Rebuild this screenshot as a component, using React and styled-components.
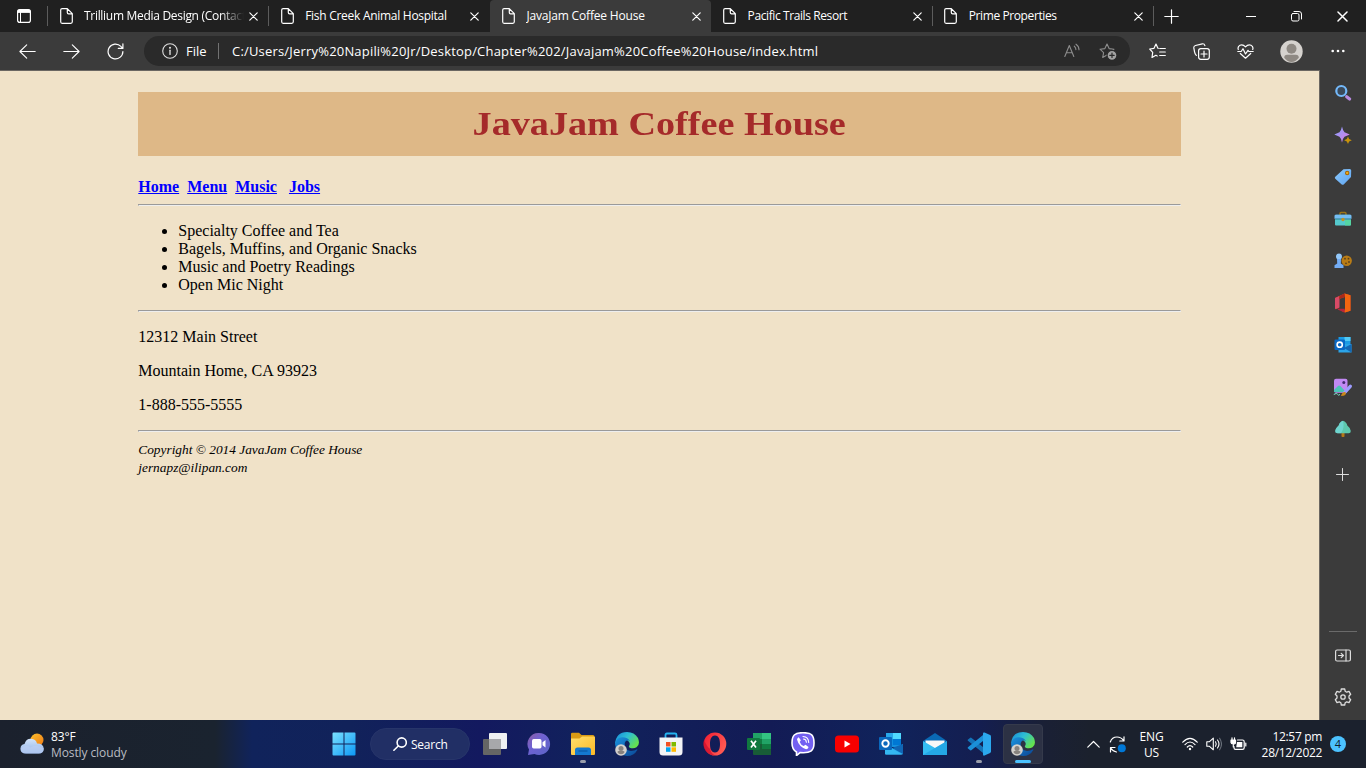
import React from "react";
import styled, { createGlobalStyle, css } from "styled-components";

const GlobalStyle = createGlobalStyle`
  * { box-sizing: border-box; }
  html, body { margin: 0; padding: 0; }
  body { overflow: hidden; background: #3b3b3b; }
  svg { display: block; flex: none; }
`;

const ui = css`
  font-family: "Open Sans", "Noto Sans", sans-serif;
  white-space: nowrap;
`;

const Screen = styled.div`
  width: 1366px;
  height: 768px;
  display: flex;
  flex-direction: column;
  overflow: hidden;
`;

/* ---------- Tab strip ---------- */
const TabStrip = styled.div`
  ${ui};
  height: 32px;
  flex: none;
  display: flex;
  background: #202020;
  color: #fff;
`;

const TabActions = styled.div`
  width: 47.5px;
  display: grid;
  place-items: center;
`;

const Tab = styled.div`
  width: 221.2px;
  height: 32px;
  display: flex;
  align-items: center;
  padding: 0 10.5px 0 12px;
  background: ${(p) => (p.$active ? "#3b3b3b" : "transparent")};
  border-radius: 4px 4px 0 0;
`;

const TabTitle = styled.span`
  flex: 1;
  margin-left: 11.5px;
  overflow: hidden;
  font-size: 12px;
  line-height: 18px;
  letter-spacing: ${(p) => p.$spacing}px;
  mask-image: ${(p) => (p.$fade ? "linear-gradient(90deg, #000 136px, transparent 160px)" : "none")};
`;

const Separator = styled.div`
  width: 1px;
  height: 20px;
  margin: 6px -0.5px 0;
  background: ${(p) => (p.$hidden ? "transparent" : "#5c5c5c")};
`;

const NewTab = styled.div`
  width: 36px;
  display: grid;
  place-items: center;
`;

const WindowControls = styled.div`
  margin-left: auto;
  padding-right: 0.5px;
  display: flex;
`;

const WindowButton = styled.div`
  width: 46px;
  display: grid;
  place-items: center;
`;

/* ---------- Address toolbar ---------- */
const Toolbar = styled.div`
  ${ui};
  height: 38px;
  flex: none;
  display: flex;
  align-items: center;
  padding: 0 6px;
  background: #3b3b3b;
  color: #fff;
`;

const ToolButton = styled.div`
  width: ${(p) => p.$w || 44}px;
  height: 38px;
  padding-right: 1px;
  display: grid;
  place-items: center;
`;

const AddressBar = styled.div`
  width: 986px;
  height: 30px;
  margin: 0 6px;
  padding: 0 4px 0 18px;
  display: flex;
  align-items: center;
  border-radius: 15px;
  background: #2a2a2a;
`;

const Scheme = styled.span`
  margin-left: 8px;
  width: 32px;
  font-size: 13px;
`;

const Divider = styled.span`
  width: 1px;
  height: 16px;
  background: #727272;
`;

const Address = styled.span`
  flex: 1;
  margin-left: 13px;
  font-size: 13px;
  letter-spacing: 0.19px;
`;

const AddressAction = styled.div`
  width: 36px;
  display: grid;
  place-items: center;
`;

/* ---------- Page and side pane ---------- */
const Middle = styled.div`
  height: 650px;
  flex: none;
  display: flex;
`;

const Page = styled.main`
  width: 1320px;
  padding: 0 8px;
  overflow: hidden;
  border-top: 1px solid #6b6762;
  border-right: 1px solid #6b6762;
  background: #f0e2c8;
  color: #000;
  font: 16px/18px "Liberation Serif", "Times New Roman", serif;
`;

const Wrapper = styled.div`
  width: 80%;
  margin: 0 auto;
`;

const Banner = styled.h1`
  margin: 21.44px 0;
  height: 64px;
  line-height: 64px;
  font-size: 34px;
  text-align: center;
  color: #a52a2a;
  background: #deb887;
`;

const BannerText = styled.span`
  display: inline-block;
  transform: scaleX(1.123);
`;

const Nav = styled.nav`
  font-weight: bold;
  font-size: 16px;
  white-space: pre;
`;

const NavLink = styled.a`
  color: #0000ff;
  text-decoration: underline;
`;

const Rule = styled.hr`
  margin: 8px 0;
`;

const Offerings = styled.ul`
  margin: 16px 0;
  padding-left: 40px;
`;

const Line = styled.p`
  margin: 16px 0;
`;

const Footer = styled.footer`
  padding-top: 1px;
  font-size: 13.35px;
  font-style: italic;
  line-height: 18px;
`;

const SidePane = styled.aside`
  width: 46px;
  display: flex;
  flex-direction: column;
  align-items: center;
  padding: 2px 0;
  background: #3b3b3b;
`;

const SideButton = styled.div`
  width: 46px;
  height: 42px;
  padding-right: 1px;
  margin-top: ${(p) => p.$gap || 0}px;
  display: grid;
  place-items: center;
`;

const SideRule = styled.div`
  width: 28px;
  height: 1px;
  margin-top: auto;
  margin-bottom: 2px;
  background: #6a6a6a;
`;

/* ---------- Taskbar ---------- */
const Taskbar = styled.footer`
  ${ui};
  height: 48px;
  flex: none;
  display: flex;
  align-items: center;
  color: #fff;
  background: linear-gradient(90deg, #1b212d 0, #1a232f 215px, #10235b 252px, #11225a 350px,
    #13195f 480px, #11225c 590px, #131b55 770px, #10235b 890px, #141e50 980px, #1a2035 1045px, #1b212d 1090px);
`;

const Weather = styled.div`
  width: 322px;
  padding-left: 19px;
  display: flex;
  align-items: center;
`;

const WeatherText = styled.div`
  margin-left: 7px;
  font-size: 12px;
  line-height: 16px;
  letter-spacing: -0.1px;
  padding-top: 2px;
`;

const Condition = styled.div`
  color: #b9bcc2;
`;

const TaskButton = styled.div`
  position: relative;
  width: 44px;
  height: 48px;
  display: grid;
  place-items: center;
`;

const ActivePlate = styled.div`
  width: 40px;
  height: 40px;
  display: grid;
  place-items: center;
  border-radius: 4px;
  background: #2c3144;
  border: 1px solid #353a4b;
`;

const RunningMark = styled.span`
  position: absolute;
  bottom: 5px;
  left: 50%;
  width: ${(p) => (p.$active ? 16 : 6)}px;
  height: 3px;
  transform: translateX(-50%);
  border-radius: 2px;
  background: ${(p) => (p.$active ? "#4cc2ff" : "#9a9eab")};
`;

const SearchPill = styled.div`
  width: 100px;
  height: 32px;
  margin: 0 3px 0 4px;
  padding-left: 22px;
  display: flex;
  align-items: center;
  border-radius: 16px;
  background: #212f65;
  border: 1px solid #27356a;
  font-size: 12px;
  font-weight: 500;
  letter-spacing: -0.25px;
`;

const SearchLabel = styled.span`
  margin-left: 4px;
  padding-top: 1px;
`;

const Tray = styled.div`
  margin-left: auto;
  padding-right: 20px;
  display: flex;
  align-items: center;
`;

const TrayItem = styled.div`
  width: ${(p) => p.$w}px;
  display: grid;
  place-items: center;
`;

const TrayText = styled.div`
  width: ${(p) => p.$w}px;
  padding-top: 1px;
  padding-left: ${(p) => p.$inset || 0}px;
  font-size: 12px;
  line-height: 16px;
  letter-spacing: ${(p) => p.$spacing}px;
  text-align: ${(p) => p.$align};
`;

const Notifications = styled.div`
  width: 16px;
  height: 16px;
  margin-left: 8px;
  border-radius: 50%;
  background: #4cc2ff;
  color: #10202c;
  font-size: 11px;
  line-height: 16px;
  text-align: center;
`;

/* ---------- Icons ---------- */
const Glyph = ({ w = 16, h = w, sw = 1, color = "#fff", children, box }) => (
  <svg width={w} height={h} viewBox={box || `0 0 ${w} ${h}`} fill="none" stroke={color}
    strokeWidth={sw} strokeLinecap="round" strokeLinejoin="round">{children}</svg>
);

const Art = ({ w = 24, h = w, children }) => (
  <svg width={w} height={h} viewBox={`0 0 ${w} ${h}`}>{children}</svg>
);

const FileIcon = () => (
  <Glyph w={13} h={16} sw={1.2}>
    <path d="M2.1.7h5.2l5 5v8.1q0 1.5-1.5 1.5H2.1Q.7 15.300.7 13.800V2.100Q.7.7 2.100.7zM7.300.9v3.600q0 1.300 1.300 1.300h3.600" />
  </Glyph>
);
const CloseIcon = ({ s = 9 }) => (
  <Glyph w={s} box="0 0 9 9" sw={1.2}><path d="M.8.8l7.400 7.400M8.200.8L.8 8.200" /></Glyph>
);
const TabActionsIcon = () => (
  <Glyph w={14}><rect x=".6" y=".6" width="12.800" height="12.800" rx="2.200" strokeWidth="1.200" />
    <path d="M1 3V2q0-1 1-1h10q1 0 1 1v1z" fill="#fff" /><path d="M3.500 3.500V13" /></Glyph>
);
const BackIcon = ({ flip }) => (
  <Glyph w={17} h={15} sw={1.1}>
    <path d={flip ? "M.8 7.500h15.300M9.300.8l6.800 6.700-6.800 6.700" : "M16.200 7.500H.9M7.700.8L.9 7.500l6.800 6.700"} />
  </Glyph>
);
const ReloadIcon = () => (
  <Glyph w={17} sw={1.2}><path d="M15.900 8.500a7.400 7.400 0 1 1-2-5.100l1.900 1.900M15.900.8v4.600h-4.600" /></Glyph>
);
const InfoIcon = () => (
  <Glyph w={16} sw={1.1} color="#dedede"><circle cx="8" cy="8" r="7.300" /><path d="M8 7.200v4.200" strokeWidth="1.400" /><circle cx="8" cy="4.700" r=".5" fill="#ddd" /></Glyph>
);
const ReadAloudIcon = () => (
  <Glyph w={16} sw={1.1} color="#8d8d8d"><path d="M.8 13.500L5.300 2.500l4.500 11M2.400 9.700h5.800M10.300 3.200q1.600 1.300 1.600 3.400M12 1.200q3 2 3 5.600" /></Glyph>
);
const starPath = "M8 1l2.100 4.600 4.900.6-3.600 3.400.9 4.900L8 12.100l-4.300 2.400.9-4.900L1 6.200l4.900-.6z";
const AddStarIcon = () => (
  <Glyph w={18} h={17} sw={1.1} color="#8d8d8d"><path d={starPath} />
    <circle cx="13" cy="12.300" r="4.900" fill="#a2a2a2" stroke="#2a2a2a" /><path d="M13 10.100v4.400M10.800 12.300h4.400" stroke="#2a2a2a" strokeWidth="1.200" /></Glyph>
);
const FavoritesIcon = () => (
  <Glyph w={17} h={16} sw={1.2}><path d="M9.300 5.300L8.900 5.200 7 1 5 5.300l-4.300.7 3 3.400-.7 5.100L6.900 12.300l1.300.7M10.700 5.500h5.600M10.700 9h5.600M10.700 12.500h5.600" /></Glyph>
);
const CollectionsIcon = () => (
  <Glyph w={17} sw={1.2}><rect x="5.600" y="5.600" width="10.700" height="10.700" rx="2.200" /><path d="M11 8v6M8 11h6M3.300 12.400Q1.900 11 1.500 8.600L.8 4.900Q.7 3 2.500 2.500L9.300.8q2-.3 2.600 1.800" /></Glyph>
);
const HealthIcon = () => (
  <Glyph w={17} h={15} sw={1.2}><path d="M1.300 5.500Q.3 2.700 3 1.200 6 .2 8.500 2.800 11 .2 14 1.200q2.700 1.500 1.700 4.300M3.300 9.500l5.200 4.700 5.200-4.700M.8 7.500h3.400L6 4.700l2.500 5.300 2.500-3.700.8 1.200h4.400" /></Glyph>
);
const MoreIcon = () => (
  <Art w={14} h={4}>{[1.7, 7, 12.3].map((x) => <circle key={x} cx={x} cy="2" r="1.300" fill="#fff" />)}</Art>
);
const Avatar = () => (
  <Art w={23}><circle cx="11.500" cy="11.500" r="11.200" fill="#d5d2ce" /><circle cx="11.500" cy="8.700" r="5" fill="#8e8983" />
    <path d="M4.200 17.800q0-3 3-3h8.600q3 0 3 3Q15.500 22 11.500 22t-7.300-4.200z" fill="#8e8983" /></Art>
);

const OutlookArt = ({ s = 24 }) => (
  <svg width={s} height={s} viewBox="0 0 24 24">
    <path d="M7 1h15v14H7z" fill="#1490df" /><path d="M14 1h8v6h-8z" fill="#50d9ff" /><path d="M7 1h7v6H7z" fill="#28a8ea" />
    <path d="M14 7h8v6h-8z" fill="#0078d4" /><path d="M6 12l9 5 9-5v9.500q0 1-1 1H7q-1 0-1-1z" fill="#28a8ea" />
    <path d="M24 12v10L13 16z" fill="#1066b5" /><path d="M6 12l17 10.500H7q-1 0-1-1z" fill="#35b8f1" />
    <rect y="5" width="13" height="13" rx="1" fill="#0a68bd" /><circle cx="6.500" cy="11.500" r="3.200" fill="none" stroke="#fff" strokeWidth="1.900" />
  </svg>
);

const SideOutlookArt = () => (
  <Art w={18}>
    <path d="M4.500 1h12v8h-12z" fill="#1b9be4" /><path d="M10.500 1h6v4h-6z" fill="#50c9f5" /><path d="M4.500 8h13v8.500h-13z" fill="#2ba4e8" />
    <path d="M17.500 8v8.500L10 12z" fill="#1267b4" /><rect x=".5" y="3.500" width="10.500" height="10.500" rx="1" fill="#0a68c4" />
    <circle cx="5.700" cy="8.700" r="2.600" fill="none" stroke="#fff" strokeWidth="1.600" />
  </Art>
);

const SideArts = [
  <Art w={18} key="search"><circle cx="7.300" cy="7" r="5" fill="#3b4a5a" stroke="#74b9fa" strokeWidth="2.200" /><path d="M12.700 12.700l2.900 2.300" stroke="#b98be0" strokeWidth="3.200" strokeLinecap="round" /></Art>,
  <Art w={18} key="spark"><defs><linearGradient id="spark" x2="1" y2="1"><stop stopColor="#83a3fd" /><stop offset="1" stopColor="#e078e4" /></linearGradient></defs>
    <path d="M8 .5Q9 5 10.500 6.200L15.800 8.500 10.500 10.800Q9 12 8 16.500 7 12 5.500 10.800L.3 8.500 5.500 6.200Q7 5 8 .5z" fill="url(#spark)" /><path d="M14 10.500l1.100 2.600 2.700 1.200-2.700 1.100L14 18l-1.200-2.600-2.600-1.100 2.600-1.200z" fill="#c8930b" /></Art>,
  <Art w={18} key="tag"><defs><linearGradient id="tag" x2="1" y2="1"><stop stopColor="#8bc9fb" /><stop offset="1" stopColor="#5fa4f2" /></linearGradient></defs>
    <path d="M9.500 1.200L15.700 1q1.500 0 1.500 1.500L17 9 9.700 16.400q-1 .9-2 0L1.300 10.700q-1-1 0-2z" fill="url(#tag)" /><circle cx="13.200" cy="5" r="2.200" fill="#a56300" /><circle cx="13.200" cy="5" r="1.200" fill="#edaa1d" /></Art>,
  <Art w={18} key="tools"><path d="M6 5V3.500q0-1 1-1h4q1 0 1 1V5" fill="none" stroke="#9c7417" strokeWidth="1.400" /><rect x="1" y="4.700" width="16" height="10.800" rx="1" fill="#55c9cd" /><path d="M.5 8.800V6q0-1.300 1.300-1.300h14.400q1.300 0 1.300 1.300v2.800z" fill="#75bdf3" /><path d="M1 9h16" stroke="#367d91" /><path d="M11 10h6v4.500q0 1-1 1h-5z" fill="#55d5a2" /><circle cx="9" cy="9.500" r="1.700" fill="#bd9426" /></Art>,
  <Art w={18} key="games"><circle cx="12.700" cy="8.700" r="5.200" fill="#b97c16" />{[[11, 6.7], [14.5, 6.7], [15, 10], [12, 11.3]].map(([x, y]) => <circle key={x + y} cx={x} cy={y} r=".9" fill="#59401d" />)}
    <circle cx="5" cy="4.600" r="3" fill="#93c8fb" /><path d="M3 7h4l-.2 4.500 2.700 1.800V16H.5v-2.700l2.700-1.800z" fill="#73acf4" /></Art>,
  <Art w={18} h={20} key="office"><path d="M10.500.5l6 1.700v15.500l-6 1.800-2.500-1 3-2V4L5 6v9l-3.700 1.300-.3-.8V5z" fill="#d83b20" /><path d="M10.500.5l6 1.700v15.500L11 19.400V4z" fill="#f16610" /><path d="M1 5l4.500-2v11.500l-4 1.500-.5-1z" fill="#d84a66" /><path d="M10.500.5L5.500 3 5 6l6-2z" fill="#a72a1a" /><path d="M4 15.800h7l-1 3.400-6-2.500z" fill="#b6263b" /></Art>,
  <SideOutlookArt key="outlook" />,
  <Art w={19} key="designer"><rect x="1" y=".8" width="13.500" height="14" rx="2" fill="#c189f3" /><path d="M1 12l4-4q1-1 2.300 0l5.700 6H1z" fill="#4bc4b6" /><circle cx="10.800" cy="4.500" r="1.500" fill="#442a72" /><path d="M17.300 8.300l-5.500 6" stroke="#9d9cff" strokeWidth="3.200" strokeLinecap="round" /><path d="M8 18q1.300-4.800 4.500-4 1.700 4-4.500 4z" fill="#c9871a" /><path d="M.8 16.500q3-2 3.700-.3t2.500.3" fill="none" stroke="#80e8d0" /></Art>,
  <Art w={18} key="tree"><path d="M7.500 12h3v4.500q-1.500 1-3 0z" fill="#b57817" /><path d="M9 .8q3.800 1.500 4.300 4.700 3.500 2.800 3.500 5.500T14 13.300H4Q1.200 13.200 1.200 11t3.500-5.500Q5.200 2.300 9 .8z" fill="#5dc8ae" /><path d="M9 .8Q5.200 2.300 4.700 5.500 1.200 8.300 1.200 11T4 13.300h3Q11 8 9 .8z" fill="#7adbe0" opacity=".65" /></Art>,
];

const GearIcon = () => (
  <Glyph w={18} sw={1.3} color="#ddd"><circle cx="9" cy="9" r="2.200" /><path d="M7.300 1h3.400l.5 2.300 1.500.9 2.300-.8 1.700 2.900L15 8v2l1.700 1.700-1.700 2.900-2.300-.8-1.500.9-.5 2.300H7.300l-.5-2.300-1.500-.9-2.300.8-1.700-2.900L3 10V8L1.300 6.300 3 3.400l2.300.8 1.500-.9z" /></Glyph>
);
const PaneIcon = () => (
  <Glyph w={16} h={13} sw={1.2} color="#ddd"><rect x=".6" y="1" width="14.800" height="11" rx="1.500" /><path d="M11 1v11M3.500 6.500H8M6.200 4.300l2.200 2.200-2.200 2.200" /></Glyph>
);

const EdgeArt = ({ id }) => (
  <Art>
    <defs><linearGradient id={`${id}a`} x1="0" y1="0" x2="1" y2=".6"><stop stopColor="#1688dd" /><stop offset=".5" stopColor="#2ebed3" /><stop offset="1" stopColor="#65e24e" /></linearGradient>
      <linearGradient id={`${id}b`} x2="1" y2="1"><stop stopColor="#1b93df" /><stop offset="1" stopColor="#0b4695" /></linearGradient></defs>
    <path d="M0 12Q1 0 12 0q7.500 0 11 6 2.500 6.500-1.500 9.300-3 1.700-6.800.4-1.500-.8-.4-2.200 1.500-3-2-5.200Q5.500 5 0 12z" fill={`url(#${id}a)`} />
    <path d="M0 12q1-6.500 7.300-6.800Q13 5.200 15 9q-4-2-5.300 2Q9 18 16 19q3.500 0 6-1.800.6 0 .3.700Q19 24 12 24 1 23 0 12z" fill={`url(#${id}b)`} />
    <circle cx="6" cy="18" r="5.800" fill="#d5d2ce" /><circle cx="6" cy="16.400" r="2.500" fill="#87827e" /><path d="M2.500 20.300q0-1.300 1.300-1.300h4.400q1.300 0 1.300 1.300Q8.500 22.300 6 22.300t-3.500-2z" fill="#87827e" />
  </Art>
);

const StartArt = () => (
  <Art><defs><linearGradient id="win" x2="1" y2="1"><stop stopColor="#7be1ff" /><stop offset="1" stopColor="#0c98f5" /></linearGradient></defs>
    <path d="M.5 1.500Q.5.500 1.500.500H11.500v11H.5zM12.500.5h10q1 0 1 1v10h-11zM.5 12.500h11v11h-10q-1 0-1-1zM12.500 12.500h11v10q0 1-1 1h-10z" fill="url(#win)" /></Art>
);

const taskApps = [
  { name: "views", art: <Art><rect x="6" y="1" width="18" height="16" rx="1" fill="#eef0f1" /><rect y="7" width="18" height="16" rx="1" fill="#656565" /><path d="M6 7h12v10H6z" fill="#a7a8ab" /></Art> },
  { name: "chat", art: <Art><defs><linearGradient id="chat" x2="1" y2="1"><stop stopColor="#8d5da2" /><stop offset=".4" stopColor="#6f62d2" /><stop offset="1" stopColor="#5b64c6" /></linearGradient></defs>
    <path d="M12 1a11 11 0 1 1-4.500 21L1 23l1-5.500A11 11 0 0 1 12 1z" fill="url(#chat)" /><rect x="5" y="7" width="9.500" height="9.500" rx="1.700" fill="#fff" /><path d="M15.500 10.200L18.500 8v7.500l-3-2.200z" fill="#fff" /></Art> },
  { name: "files", running: true, art: <Art><defs><linearGradient id="folder" x2="1" y2="1"><stop stopColor="#ffe06e" /><stop offset="1" stopColor="#fcb925" /></linearGradient></defs>
    <path d="M0 2q0-1.300 1.300-1.300H8L10.500 3H22q1.500 0 1.500 1.500V12H0z" fill="#d99b15" /><path d="M0 6.500h8.500l2.500-2H23q1 0 1 1V22q0 1-1 1H1q-1 0-1-1z" fill="url(#folder)" /><path d="M4 23v-5q0-2.500 2.500-2.500h11Q20 15.500 20 18v5z" fill="#1479d0" /><path d="M7.500 19h9" stroke="#0b5fae" strokeWidth="1.500" /></Art> },
  { name: "edge", art: <EdgeArt id="e1" /> },
  { name: "store", art: <Art><path d="M6.500 6V3q0-1.500 1.500-1.500h8q1.500 0 1.500 1.500v3" fill="none" stroke="#25b4f1" strokeWidth="1.800" /><path d="M.5 5.500h23V20q0 3.500-3.500 3.500H4Q.5 23.500.5 20z" fill="#f3f4f6" /><path d="M7 10h4.500v4.500H7z" fill="#f25022" /><path d="M12.500 10H17v4.500h-4.500z" fill="#7fba00" /><path d="M7 15.300h4.500v4.500H7z" fill="#00a4ef" /><path d="M12.500 15.300H17v4.500h-4.500z" fill="#ffb900" /></Art> },
  { name: "opera", art: <Art><defs><linearGradient id="opera" x2="1" y2=".5"><stop stopColor="#f21b31" /><stop offset="1" stopColor="#ff5952" /></linearGradient></defs><path fillRule="evenodd" d="M12 .5a11.300 11.500 0 1 0 0 23 11.300 11.500 0 0 0 0-23zM12 3.500c4 0 5 4.500 5 8.500s-1 8.500-5 8.500S7 16 7 12s1-8.500 5-8.500z" fill="url(#opera)" /><path d="M1 8a11.300 11.500 0 0 0 11 15.500Q8 21.500 7.200 17 4 15 1 8z" fill="#c7092a" opacity=".6" /></Art> },
  { name: "excel", art: <Art><path d="M6 1h9v6H6z" fill="#21a366" /><path d="M15 1h9v6h-9z" fill="#33c481" /><path d="M6 7h9v5H6z" fill="#107c41" /><path d="M15 7h9v5h-9z" fill="#21a366" /><path d="M6 12h9v5H6z" fill="#185c37" /><path d="M15 12h9v5h-9z" fill="#107c41" /><path d="M6 17h18v6H7q-1 0-1-1z" fill="#185c37" /><rect y="6" width="13" height="12" rx="1" fill="#10793f" /><path d="M4 8.800l5 6.700M9 8.800l-5 6.700" stroke="#fff" strokeWidth="1.700" /></Art> },
  { name: "viber", art: <Art><path d="M12 .7C3.500.7 1 3.500 1 11q0 6.500 4.500 9v3.600l3.500-3C19.500 21.500 23 19 23 11S20.500.7 12 .7z" fill="#7360f2" stroke="#fff" strokeWidth="1.600" /><path d="M7.700 5.300l2.200 2.900-1.200 1.700q1.200 3 4 4.200l1.800-1.300 3 2.200q0 2-2.300 2.300Q8 15 6 7.500q.2-1.500 1.700-2.200z" fill="#fff" /><path d="M12 4.500q5.500.4 5.700 6M12.500 7q2.700.3 2.900 3.200" fill="none" stroke="#fff" strokeWidth="1.100" strokeLinecap="round" /></Art> },
  { name: "youtube", art: <Art><rect y="3.500" width="24" height="17" rx="3.500" fill="#f80000" /><path d="M9.500 8.500v7l6-3.500z" fill="#fff" /></Art> },
  { name: "outlook", art: <OutlookArt /> },
  { name: "mail", art: <Art><path d="M0 9L12 1l12 8-12 9z" fill="#0a69b4" /><path d="M2.500 8.500h19V12L12 18 2.500 12z" fill="#f8f8f8" /><path d="M0 9l12 7 12-7v14H0z" fill="#35bdf2" /><path d="M24 9L0 23h24z" fill="#1598dd" opacity=".55" /></Art> },
  { name: "code", running: true, art: <Art><path d="M1 7.500l2.300-1.700q.7-.4 1.300.1L18.500 17v6L.9 8.800Q.3 8 1 7.500z" fill="#1473b8" /><path d="M1 16.500l2.300 1.700q.7.400 1.300-.1L18.500 7V1L.9 15.200Q.3 16 1 16.500z" fill="#1b90d8" /><path d="M17.500.5l5.600 2.600q.9.500.9 1.400v15q0 .9-.9 1.400l-5.600 2.600q-1.500.5-1.500-1V1.500q0-1.500 1.500-1z" fill="#2ba8ee" /></Art> },
];

const tabs = [
  { title: "Trillium Media Design (Contact)", fade: true, sep: true, spacing: -0.3 },
  { title: "Fish Creek Animal Hospital", spacing: -0.28 },
  { title: "JavaJam Coffee House", active: true, spacing: -0.18 },
  { title: "Pacific Trails Resort", sep: true, spacing: -0.4 },
  { title: "Prime Properties", sep: true, spacing: -0.4 },
];

export default function App() {
  return (
    <Screen>
      <GlobalStyle />
      <TabStrip>
        <TabActions><TabActionsIcon /></TabActions>
        <Separator />
        {tabs.map((t) => (
          <React.Fragment key={t.title}>
            <Tab $active={t.active}>
              <FileIcon />
              <TabTitle $fade={t.fade} $spacing={t.spacing}>{t.title}</TabTitle>
              <CloseIcon />
            </Tab>
            <Separator $hidden={!t.sep} />
          </React.Fragment>
        ))}
        <NewTab><Glyph w={15} sw={1.2}><path d="M7.500.8v13.400M.8 7.500h13.400" /></Glyph></NewTab>
        <WindowControls>
          <WindowButton><Glyph w={10}><path d="M0 5.500h10" /></Glyph></WindowButton>
          <WindowButton><Glyph w={11}><rect x=".5" y="2.500" width="7.500" height="7.500" rx="1.500" /><path d="M3 .5h5q2.500 0 2.500 2.500v5" /></Glyph></WindowButton>
          <WindowButton><CloseIcon s={11} /></WindowButton>
        </WindowControls>
      </TabStrip>

      <Toolbar>
        <ToolButton><BackIcon /></ToolButton>
        <ToolButton><BackIcon flip /></ToolButton>
        <ToolButton><ReloadIcon /></ToolButton>
        <AddressBar>
          <InfoIcon />
          <Scheme>File</Scheme>
          <Divider />
          <Address>C:/Users/Jerry%20Napili%20Jr/Desktop/Chapter%202/Javajam%20Coffee%20House/index.html</Address>
          <AddressAction><ReadAloudIcon /></AddressAction>
          <AddressAction><AddStarIcon /></AddressAction>
        </AddressBar>
        <ToolButton><FavoritesIcon /></ToolButton>
        <ToolButton><CollectionsIcon /></ToolButton>
        <ToolButton><HealthIcon /></ToolButton>
        <ToolButton $w={48}><Avatar /></ToolButton>
        <ToolButton><MoreIcon /></ToolButton>
      </Toolbar>

      <Middle>
        <Page>
          <Wrapper>
            <Banner><BannerText>JavaJam Coffee House</BannerText></Banner>
            <Nav>
              <NavLink>Home</NavLink>{"  "}<NavLink>Menu</NavLink>{"  "}<NavLink>Music</NavLink>{"   "}<NavLink>Jobs</NavLink>
            </Nav>
            <Rule />
            <Offerings>
              <li>Specialty Coffee and Tea</li>
              <li>Bagels, Muffins, and Organic Snacks</li>
              <li>Music and Poetry Readings</li>
              <li>Open Mic Night</li>
            </Offerings>
            <Rule />
            <Line>12312 Main Street</Line>
            <Line>Mountain Home, CA 93923</Line>
            <Line>1-888-555-5555</Line>
            <Rule />
            <Footer>
              <div>Copyright © 2014 JavaJam Coffee House</div>
              <div>jernapz@ilipan.com</div>
            </Footer>
          </Wrapper>
        </Page>
        <SidePane>
          {SideArts.map((art, i) => <SideButton key={i}>{art}</SideButton>)}
          <SideButton $gap={3}><Glyph w={13} color="#ddd"><path d="M6.500.5v12M.5 6.500h12" /></Glyph></SideButton>
          <SideRule />
          <SideButton><PaneIcon /></SideButton>
          <SideButton><GearIcon /></SideButton>
        </SidePane>
      </Middle>

      <Taskbar>
        <Weather>
          <Art w={25} h={24}>
            <defs><linearGradient id="cloud" y2="1" x2="0"><stop stopColor="#d3e4fa" /><stop offset="1" stopColor="#8eb2e8" /></linearGradient>
              <linearGradient id="sun" x2="1" y2="1"><stop stopColor="#fbc02c" /><stop offset="1" stopColor="#f07a16" /></linearGradient></defs>
            <circle cx="18" cy="8" r="6.500" fill="url(#sun)" />
            <path d="M7 21.500q-5.500 0-5.500-5 0-4 4-4.600Q7 6.500 12 6.700q5 .3 6 4.800 6.500 0 6.800 5.300-.3 4.700-5 4.700z" fill="url(#cloud)" />
            <path d="M1.500 16.500q6-5 10-1 5-4 13.300 1-.3 5-5 5H7q-5.500 0-5.500-5z" fill="#bdd0f3" opacity=".65" />
          </Art>
          <WeatherText><div>83°F</div><Condition>Mostly cloudy</Condition></WeatherText>
        </Weather>
        <TaskButton><StartArt /></TaskButton>
        <SearchPill>
          <Glyph w={14} sw={1.6}><circle cx="8.700" cy="5.500" r="4.600" /><path d="M5.300 9L.9 13.300" /></Glyph>
          <SearchLabel>Search</SearchLabel>
        </SearchPill>
        {taskApps.map((a) => (
          <TaskButton key={a.name}>{a.art}{a.running && <RunningMark />}</TaskButton>
        ))}
        <TaskButton><ActivePlate><EdgeArt id="e2" /></ActivePlate><RunningMark $active /></TaskButton>
        <Tray>
          <TrayItem $w={24}><Glyph w={13} h={8} sw={1.2}><path d="M.8 7.200l5.700-5.700 5.700 5.700" /></Glyph></TrayItem>
          <TrayItem $w={24}>
            <Glyph w={17} sw={1.2}><path d="M1.300 6Q3 1 8 1q4 0 6.500 3.500M15 .8v4.200h-4.200M1.500 16v-4.500H6M1.700 12Q4 15.500 7.500 16" /><circle cx="12.800" cy="12.200" r="4" fill="#0078d7" stroke="none" /></Glyph>
          </TrayItem>
          <TrayText $w={44} $align="center" $spacing={-0.2} $inset={1}>ENG<br />US</TrayText>
          <TrayItem $w={33}>
            <Glyph w={16} h={14} sw={1.2}><path d="M.8 5.200Q8-2.500 15.200 5.200M3 7.600q5-5.200 10 0M5.300 10q2.700-2.800 5.400 0" /><circle cx="8" cy="12" r="1.200" fill="#fff" stroke="none" /></Glyph>
          </TrayItem>
          <TrayItem $w={16}>
            <Glyph w={16} h={14} sw={1.1}><path d="M.8 4.700h2.700L7.300 1.200v11.600L3.500 9.300H.8zM9.500 4.800q1.500 2.200 0 4.400M11.500 3q3 4 0 8" /><path d="M13.600 1.300q3.800 5.700 0 11.400" stroke="#69707a" /></Glyph>
          </TrayItem>
          <TrayItem $w={33}>
            <Glyph w={17} h={14} sw={1.2}><path d="M7.500 3h5q1.700 0 1.700 1.700v6q0 1.600-1.700 1.600h-7q-1.500 0-1.500-1.600V9.500" /><path d="M7 5h5.300v5.300H6.200z" fill="#fff" stroke="none" /><path d="M1 3h4.500v2.500Q5.500 7 3.300 7T1 5.500zM2 .8V3M4.500.8V3M3.300 7v3M15.800 6v3" fill="#fff" /></Glyph>
          </TrayItem>
          <TrayText $w={67} $align="right" $spacing={-0.33}>12:57 pm<br />28/12/2022</TrayText>
          <Notifications>4</Notifications>
        </Tray>
      </Taskbar>
    </Screen>
  );
}
